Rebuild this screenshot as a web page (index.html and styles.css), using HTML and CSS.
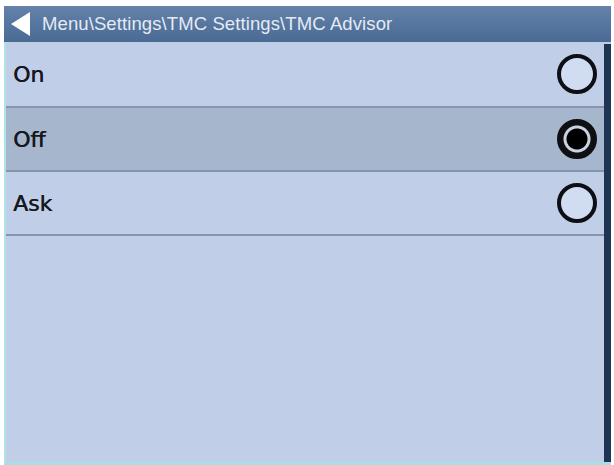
FILE: index.html
```html
<!DOCTYPE html>
<html lang="en">
  <head>
    <meta charset="UTF-8" />
    <meta name="viewport" content="width=device-width, initial-scale=1.0" />
    <title>TMC Advisor</title>
    <link rel="stylesheet" href="styles.css">
  </head>
  <body>
    <div class="screen">
      <div class="title-bar">
        <svg class="back" width="22" height="26" viewBox="0 0 22 26">
          <polygon points="1,13 20,1 20,25" fill="#ffffff" />
        </svg>
        <span class="path">Menu\Settings\TMC Settings\TMC Advisor</span>
      </div>

      <div class="main">
        <ul class="options">
          <li class="option">
            <span class="label">On</span>
            <span class="radio"></span>
          </li>
          <li class="option selected">
            <span class="label">Off</span>
            <span class="radio checked"></span>
          </li>
          <li class="option">
            <span class="label">Ask</span>
            <span class="radio"></span>
          </li>
        </ul>
        <div class="scrollbar"></div>
      </div>
    </div>
  </body>
</html>
```

FILE: styles.css
```css
body {
  margin: 0;
  background: #ffffff;
  font-family: "DejaVu Sans", Verdana, sans-serif;
}
.screen {
  width: 607px;
  height: 459px;
  margin: 6px 3px 0 4px;
  display: flex;
  flex-direction: column;
}
.title-bar {
  height: 36px;
  display: flex;
  align-items: center;
  background: linear-gradient(#6482aa, #4a6a94);
  padding-left: 6px;
}
.back {
  display: block;
}
.path {
  margin-left: 10px;
  color: #e4ebf4;
  font-family: "Liberation Sans", Arial, sans-serif;
  font-size: 18.5px;
  letter-spacing: 0.1px;
}
.main {
  flex: 1;
  display: flex;
  background: #c0cfe7;
  border-left: 2px solid #aee3ea;
  border-bottom: 3px solid #a6dfe4;
}
.options {
  flex: 1;
  list-style: none;
  margin: 0;
  padding: 0;
}
.option {
  height: 62px;
  display: flex;
  align-items: center;
  justify-content: space-between;
  padding: 0 7px 0 7px;
  border-bottom: 2px solid #8595ad;
}
.option:first-child {
  height: 64px;
}
.option.selected {
  background: #a6b6cd;
}
.label {
  font-size: 22px;
  color: #15181f;
  text-shadow: 0.4px 0 0 #15181f;
}
.radio {
  box-sizing: border-box;
  width: 40px;
  height: 40px;
  border: 4px solid #0d0f14;
  border-radius: 50%;
  background: #d0dcf2;
}
.radio.checked {
  background: radial-gradient(circle, #000 0 10px, #c9d3e4 11px 13px, #111 14px);
}
.scrollbar {
  width: 7px;
  margin-top: 2px;
  background: #1e3654;
}
```
